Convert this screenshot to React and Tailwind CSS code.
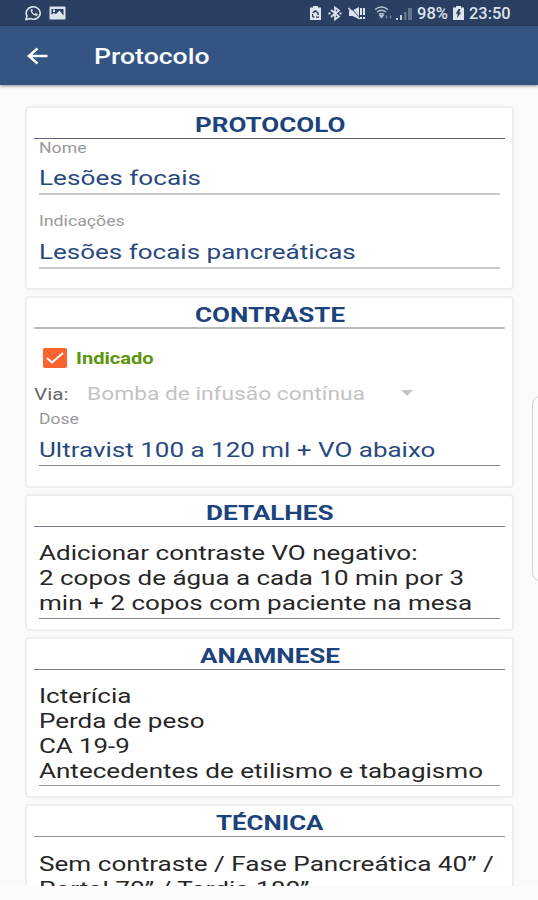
import { useLayoutEffect, useRef, useState } from "react";
import { clsx } from "clsx";

// A single line of text, widened to the given width in pixels.
function Wide({ w, className, children }) {
  const ref = useRef(null);
  const [scale, setScale] = useState(1.25);
  useLayoutEffect(() => {
    setScale(w / ref.current.offsetWidth);
  }, [w]);
  return (
    <div className={clsx("whitespace-nowrap", className)} style={{ width: w }}>
      <span ref={ref} className="inline-block origin-left" style={{ transform: `scaleX(${scale})` }}>
        {children}
      </span>
    </div>
  );
}

function Card({ title, w, line, className, children }) {
  return (
    <section className={clsx("shrink-0 rounded-[4px] border-2 border-[#eeeeee] bg-white px-[7px]", className)}>
      <div className={clsx("flex h-[31px] justify-center", line)}>
        <Wide w={w} className="text-[21px] font-bold leading-[34px] text-[#1c437c]">{title}</Wide>
      </div>
      {children}
    </section>
  );
}

function Label({ w, className, children }) {
  return <Wide w={w} className={clsx("ml-[5px] h-[18px] text-[14px] leading-[18px] text-[#999]", className)}>{children}</Wide>;
}

function Lines({ items, className }) {
  return (
    <div className={clsx("mx-[5px] text-[21px] leading-[27px]", className)}>
      {items.map(([text, w]) => (
        <Wide key={text} w={w} className="h-[25px]">{text}</Wide>
      ))}
    </div>
  );
}

function StatusBar() {
  return (
    <div className="flex h-[26px] items-center bg-[#2a3f61] pl-[25px] text-[#dce4ee]">
      <svg width="18" height="16" viewBox="0 0 18 16" fill="none" stroke="currentColor">
        <path d="M1 14.5 2 10.9A7 6.2 0 1 1 5.2 13.6Z" strokeWidth="1.6" />
        <path d="M6 4.2c-1.7 1.9 2.6 7.2 5.8 6.5 1.2-.3 1.2-1.6.5-2l-1.5-.7-1 .9C8.500 8.500 7.600 7.500 7.100 6.400l.7-.8-.6-1.500Z" fill="currentColor" stroke="none" />
      </svg>
      <svg className="ml-[6px]" width="17" height="14" viewBox="0 0 17 14">
        <path fill="currentColor" fillRule="evenodd" d="M1.500.5h14q1 0 1 1v11q0 1-1 1h-14q-1 0-1-1v-11q0-1 1-1ZM2.500 3v6l2-2 2.500 1 3.500-3.500 4 5V3ZM4 3.500h2V6H4Z" />
      </svg>
      <svg className="ml-[244px]" width="11" height="14" viewBox="0 0 11 14">
        <path fill="currentColor" fillRule="evenodd" d="M3 0h5v1.500h3V14H0V1.500h3ZM2 8h1.200v2.500H5L3.500 12 2 10.800ZM5.500 4 8.500 6.500 9 9H7.500L7 7 5.500 5.800 4 7H2.500L3 5.500ZM6 10.500h3v1.200H6Z" />
      </svg>
      <svg className="ml-[7px]" width="14" height="15" viewBox="0 0 14 15" fill="none" stroke="currentColor" strokeWidth="1.700">
        <path d="m3 4 8 6.500-4 3v-12l4 3L3 11" />
        <path d="M.5 7.500h2M11.500 7.500h2" strokeWidth="2" />
      </svg>
      <svg className="ml-[6px]" width="18" height="15" viewBox="0 0 18 15">
        <path fill="currentColor" d="M1 4.500h3.500L11 1v12L4.500 10H1Z" />
        <path d="m2 1 11 12" stroke="#2a3f61" strokeWidth="1" />
        <path d="m.5 2 11 11" stroke="currentColor" strokeWidth="1.600" />
        <path d="M13 2v7M13 11v2M16 2v7M16 11v2" stroke="currentColor" strokeWidth="2" />
      </svg>
      <svg className="ml-[8px]" width="19" height="14" viewBox="0 0 19 14" fill="none" stroke="#b6c2d2" strokeWidth="1.500">
        <path d="M1 3.500Q7.500-1.500 14 3.500M3 6q4.500-3.500 9 0M5 8.500q2.500-2 5 0" />
        <path d="m6 9.500 1.500 2L9 9.500Z" fill="#dce4ee" />
        <path d="M12.500 9.500v3M16.500 9.500v3" stroke="#71829d" />
      </svg>
      <svg className="ml-[3px]" width="16" height="14" viewBox="0 0 16 14">
        <path d="M0 12h2v2H0ZM4 9h2v5H4Z" fill="#c4cedb" />
        <path d="M8 6h2.500v8H8ZM12 2h4v12h-4Z" fill="#64758f" />
      </svg>
      <Wide w={31} className="ml-[5px] pt-px text-[16px] font-medium leading-[26px]">98%</Wide>
      <svg className="ml-[5px]" width="11" height="14" viewBox="0 0 11 14">
        <path fill="currentColor" fillRule="evenodd" d="M3 0h5v1.500h3V14H0V1.500h3ZM5.500 3 2.800 7.800h2L4 12l4.200-5.500h-2L7.500 3Z" />
      </svg>
      <Wide w={42} className="ml-[5px] pt-px text-[16px] font-medium leading-[26px]">23:50</Wide>
    </div>
  );
}

export default function App() {
  return (
    <div className="relative h-[900px] w-[538px] overflow-hidden bg-[#fcfcfc] font-[Roboto,sans-serif]">
      <StatusBar />
      <header className="relative flex h-[59px] items-center bg-[#345584] pl-[27px] text-[#fafcff] shadow-[0_1px_3px_rgba(0,0,0,0.45)]">
        <svg width="21" height="18" viewBox="0 0 21 18" fill="none" stroke="currentColor" strokeWidth="2.400">
          <path d="M20.500 9H2M10.500 1.500 1.800 9l8.700 7.500" />
        </svg>
        <Wide w={116} className="ml-[46px] pt-[2px] text-[22px] font-medium leading-[26px]">Protocolo</Wide>
      </header>

      <main className="flex h-[801px] flex-col gap-1.5 overflow-hidden bg-[#fafafa] pl-[25px] pr-[24px] pt-[21px]">
        <Card title="PROTOCOLO" w={150} line="border-b border-[#5a6285]" className="h-[184px]">
          <Label w={48}>Nome</Label>
          <Lines items={[["Lesões focais", 162]]} className="mt-[8px] h-[30px] border-b-2 border-[#cbcbcb] text-[#284980]" />
          <Label w={86} className="mt-[17px]">Indicações</Label>
          <Lines items={[["Lesões focais pancreáticas", 317]]} className="mt-[9px] h-[30px] border-b-2 border-[#cbcbcb] text-[#284980]" />
        </Card>

        <Card title="CONTRASTE" w={150} line="border-b-2 border-[#bababa]" className="h-[192px]">
          <div className="ml-[9px] mt-[18px] flex h-[21px] items-center">
            <svg width="24" height="20" viewBox="0 0 24 20">
              <rect width="24" height="20" rx="2" fill="#f9632f" />
              <path d="m4 10 5 4.500L20 5" fill="none" stroke="#fff" strokeWidth="2" />
            </svg>
            <Wide w={78} className="ml-[9px] pt-[2px] text-[17px] font-bold leading-[21px] text-[#5b960d]">Indicado</Wide>
          </div>
          <div className="mt-[12px] flex h-[26px] items-center">
            <Wide w={34} className="pt-[2px] text-[17px] leading-[24px] text-[#666]">Via:</Wide>
            <Wide w={278} className="ml-[19px] pt-px text-[19px] leading-[24px] text-[#c3c3c3]">Bomba de infusão contínua</Wide>
            <svg className="ml-[36px]" width="12" height="6" viewBox="0 0 12 6">
              <path d="M0 0h12L6 6Z" fill="#c3c3c3" />
            </svg>
          </div>
          <Label w={40} className="mt-[4px]">Dose</Label>
          <Lines items={[["Ultravist 100 a 120 ml + VO abaixo", 396]]} className="mt-[9px] h-[29px] border-b border-[#858585] text-[#284980]" />
        </Card>

        <Card title="DETALHES" w={128} line="border-b border-[#777883]" className="h-[137px]">
          <Lines
            items={[
              ["Adicionar contraste VO negativo:", 379],
              ["2 copos de água a cada 10 min por 3", 425],
              ["min + 2 copos com paciente na mesa", 433],
            ]}
            className="mt-[13px] h-[79px] border-b border-[#858585] text-[#262626]"
          />
        </Card>

        <Card title="ANAMNESE" w={140} line="border-b border-[#777883]" className="h-[161px]">
          <Lines
            items={[
              ["Icterícia", 93],
              ["Perda de peso", 166],
              ["CA 19-9", 91],
              ["Antecedentes de etilismo e tabagismo", 444],
            ]}
            className="mt-[13px] h-[103px] border-b border-[#999] text-[#262626]"
          />
        </Card>

        <Card title="TÉCNICA" w={107} line="border-b border-[#8b9494]" className="h-[120px]">
          <Lines
            items={[
              ["Sem contraste / Fase Pancreática 40” /", 455],
              ["Portal 70” / Tardia 180”", 270],
            ]}
            className="mt-[14px] text-[#262626]"
          />
        </Card>
      </main>

      <div className="absolute -right-[10px] top-[396px] h-[185px] w-[16px] rounded-[8px] border border-[#d2d2d2] bg-[#fafafa]" />
    </div>
  );
}
